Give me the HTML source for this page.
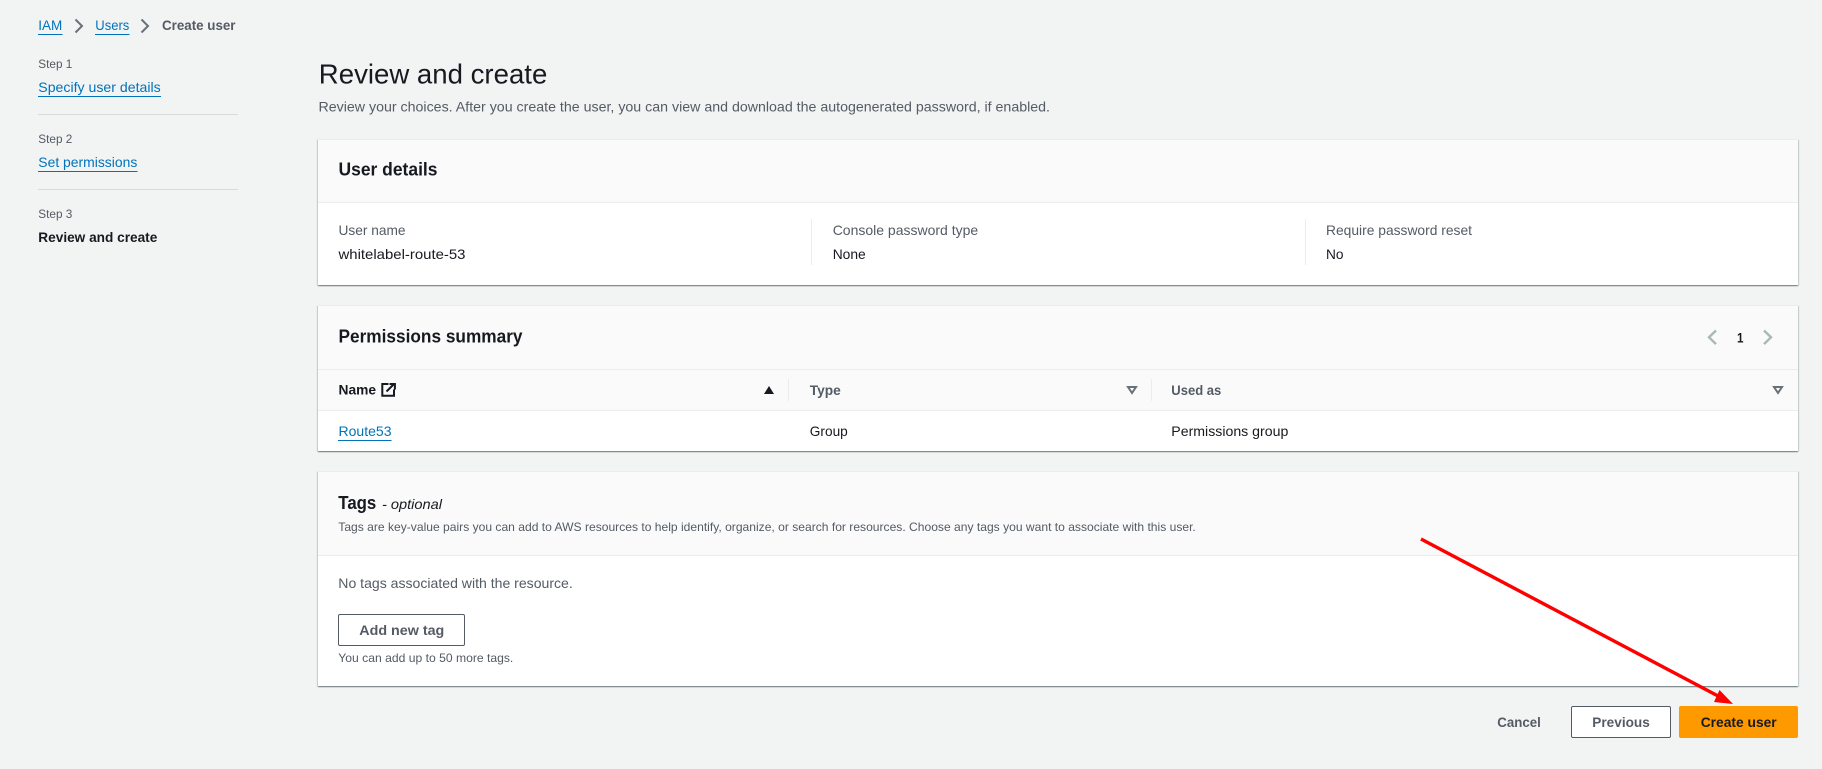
<!DOCTYPE html>
<html lang="en"><head><meta charset="utf-8"><title>Review and create</title>
<style>
html,body{margin:0;padding:0;width:1822px;height:769px;overflow:hidden;background:#f2f3f3}
.card{position:absolute;left:318px;width:1480px;background:#fff;box-shadow:0 1px 1px 0 rgba(0,28,36,.42),1px 1px 1px 0 rgba(0,28,36,.13),-1px 1px 1px 0 rgba(0,28,36,.13);border-top:1px solid #eaeded;box-sizing:border-box}
.h{position:absolute;left:0;right:0;top:0;background:#fafafa;border-bottom:1px solid #eaeded;box-sizing:border-box}
.btn{position:absolute;box-sizing:border-box;border-radius:2px;border:1px solid #545b64;background:#fff}
svg{position:absolute;left:0;top:0}
text{font-family:"Liberation Sans",sans-serif;font-size:14px;fill:#16191f}
.g{fill:#545b64}.l{fill:#0073bb}.b{font-weight:700}
.s{font-size:12px}.t{font-size:18px;font-weight:700}
</style></head><body>
<div class="card" style="top:139px;height:146px"><div class="h" style="height:63px"></div></div>
<div class="card" style="top:305px;height:146px"><div class="h" style="height:64px"></div><div style="position:absolute;left:0;right:0;top:64px;height:41px;background:#fafafa;border-bottom:1px solid #eaeded;box-sizing:border-box"></div></div>
<div class="card" style="top:471px;height:215px"><div class="h" style="height:84px"></div></div>
<div class="btn" style="left:338px;top:614px;width:127px;height:32px"></div>
<div class="btn" style="left:1571px;top:706px;width:100px;height:32px"></div>
<div class="btn" style="left:1679px;top:706px;width:119px;height:32px;background:#f90;border-color:#f90"></div>
<svg width="1822" height="769" viewBox="0 0 1822 769">
<!-- breadcrumb -->
<text class="l" x="38.3" y="30" textLength="24" lengthAdjust="spacingAndGlyphs">IAM</text>
<rect x="38" y="34" width="24.5" height="1" fill="#0073bb"/>
<path d="M75.5 19.5l6.5 6.5-6.5 6.5" fill="none" stroke="#687078" stroke-width="2"/>
<text class="l" x="95.3" y="30" textLength="34" lengthAdjust="spacingAndGlyphs">Users</text>
<rect x="95" y="34" width="34.5" height="1" fill="#0073bb"/>
<path d="M141.5 19.5l6.5 6.5-6.5 6.5" fill="none" stroke="#687078" stroke-width="2"/>
<text class="g b" x="162" y="30" textLength="73.5" lengthAdjust="spacingAndGlyphs">Create user</text>
<!-- steps -->
<text class="g s" x="38.3" y="68" textLength="34" lengthAdjust="spacingAndGlyphs">Step 1</text>
<text class="l" x="38.3" y="92" textLength="122.4" lengthAdjust="spacingAndGlyphs">Specify user details</text>
<rect x="38" y="96" width="123" height="1" fill="#0073bb"/>
<rect x="38" y="114" width="200" height="1" fill="#d5dbdb"/>
<text class="g s" x="38.3" y="143" textLength="34" lengthAdjust="spacingAndGlyphs">Step 2</text>
<text class="l" x="38.3" y="167" textLength="99" lengthAdjust="spacingAndGlyphs">Set permissions</text>
<rect x="38" y="171" width="99.5" height="1" fill="#0073bb"/>
<rect x="38" y="189" width="200" height="1" fill="#d5dbdb"/>
<text class="g s" x="38.3" y="218" textLength="34" lengthAdjust="spacingAndGlyphs">Step 3</text>
<text class="b" x="38.3" y="242" textLength="119" lengthAdjust="spacingAndGlyphs">Review and create</text>
<!-- title -->
<text x="318.8" y="83.5" style="font-size:28px" textLength="228.5" lengthAdjust="spacingAndGlyphs">Review and create</text>
<text class="g" x="318.5" y="111.5" textLength="731.5" lengthAdjust="spacingAndGlyphs">Review your choices. After you create the user, you can view and download the autogenerated password, if enabled.</text>
<!-- user details -->
<text class="t" x="338.5" y="175.5" textLength="99" lengthAdjust="spacingAndGlyphs">User details</text>
<text class="g" x="338.5" y="235" textLength="67" lengthAdjust="spacingAndGlyphs">User name</text>
<text x="338.5" y="259" textLength="127" lengthAdjust="spacingAndGlyphs">whitelabel-route-53</text>
<rect x="811" y="219" width="1" height="46" fill="#eaeded"/>
<text class="g" x="832.7" y="235" textLength="145.5" lengthAdjust="spacingAndGlyphs">Console password type</text>
<text x="832.7" y="259" textLength="33" lengthAdjust="spacingAndGlyphs">None</text>
<rect x="1305" y="219" width="1" height="46" fill="#eaeded"/>
<text class="g" x="1326" y="235" textLength="146" lengthAdjust="spacingAndGlyphs">Require password reset</text>
<text x="1326" y="259" textLength="17.5" lengthAdjust="spacingAndGlyphs">No</text>
<!-- permissions -->
<text class="t" x="338.5" y="342.5" textLength="184" lengthAdjust="spacingAndGlyphs">Permissions summary</text>
<path d="M1716 330.5l-7 6.8 7 6.8" fill="none" stroke="#aab7b8" stroke-width="2.4"/>
<text class="b" x="1737" y="342.5" textLength="6.5" lengthAdjust="spacingAndGlyphs">1</text>
<path d="M1764 330.5l7 6.8-7 6.8" fill="none" stroke="#aab7b8" stroke-width="2.4"/>
<text class="b" x="338.5" y="394.5" textLength="37.5" lengthAdjust="spacingAndGlyphs">Name</text>
<path d="M388.5 384H382.3V395.7H394V389.5M386.5 391.5L394 384M389.5 384H394.9V389.5" fill="none" stroke="#16191f" stroke-width="2"/>
<path d="M764 394l5-8 5 8z" fill="#16191f"/>
<rect x="788" y="379" width="1" height="22" fill="#eaeded"/>
<text class="g b" x="809.8" y="395" textLength="31" lengthAdjust="spacingAndGlyphs">Type</text>
<path d="M1128 387h8l-4 6z" fill="none" stroke="#687078" stroke-width="2"/>
<rect x="1151" y="379" width="1" height="22" fill="#eaeded"/>
<text class="g b" x="1171.3" y="395" textLength="50" lengthAdjust="spacingAndGlyphs">Used as</text>
<path d="M1774 387h8l-4 6z" fill="none" stroke="#687078" stroke-width="2"/>
<text class="l" x="338.5" y="436" textLength="53" lengthAdjust="spacingAndGlyphs">Route53</text>
<rect x="338" y="440" width="53.5" height="1" fill="#0073bb"/>
<text x="809.8" y="436" textLength="38" lengthAdjust="spacingAndGlyphs">Group</text>
<text x="1171.3" y="436" textLength="117" lengthAdjust="spacingAndGlyphs">Permissions group</text>
<!-- tags -->
<text class="t" x="338.3" y="509" textLength="38" lengthAdjust="spacingAndGlyphs">Tags</text>
<text x="382" y="509" style="font-style:italic" textLength="60" lengthAdjust="spacingAndGlyphs">- optional</text>
<text class="g s" x="338.3" y="531" textLength="857.5" lengthAdjust="spacingAndGlyphs">Tags are key-value pairs you can add to AWS resources to help identify, organize, or search for resources. Choose any tags you want to associate with this user.</text>
<text class="g" x="338.3" y="588" textLength="234.5" lengthAdjust="spacingAndGlyphs">No tags associated with the resource.</text>
<text class="g b" x="359.3" y="635" textLength="85" lengthAdjust="spacingAndGlyphs">Add new tag</text>
<text class="g s" x="338.3" y="662" textLength="175" lengthAdjust="spacingAndGlyphs">You can add up to 50 more tags.</text>
<!-- footer -->
<text class="g b" x="1497.3" y="727" textLength="43.5" lengthAdjust="spacingAndGlyphs">Cancel</text>
<text class="g b" x="1592.3" y="727" textLength="57.5" lengthAdjust="spacingAndGlyphs">Previous</text>
<text class="b" x="1700.7" y="727" textLength="76" lengthAdjust="spacingAndGlyphs">Create user</text>
<!-- arrow -->
<path d="M1421 539L1719 696.5" stroke="#f00" stroke-width="3.4" fill="none"/>
<path d="M1733 704L1714 702L1719.5 690z" fill="#f00"/>
</svg>
</body></html>
